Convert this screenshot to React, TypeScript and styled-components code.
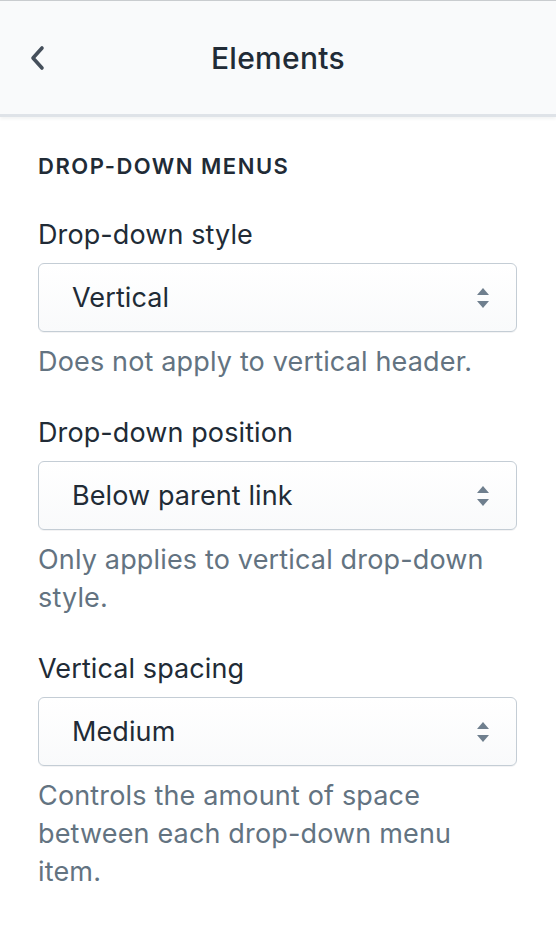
import React from 'react'
import styled, { createGlobalStyle } from 'styled-components'

const GlobalStyle = createGlobalStyle`
  html, body {
    margin: 0;
    padding: 0;
    background: #ffffff;
    font-family: Inter, "Noto Sans", "Liberation Sans", sans-serif;
    -webkit-font-smoothing: antialiased;
  }
`

const Page = styled.div`
  width: 556px;
  min-height: 932px;
  background: #ffffff;
`

const Header = styled.header`
  position: relative;
  height: 113px;
  border-top: 1px solid #c9cccf;
  border-bottom: 3px solid #dfe3e8;
  background: #f9fafb;
  display: flex;
  align-items: center;
  justify-content: center;
  box-shadow: 0 2px 3px rgba(33, 43, 54, 0.06);
`

const BackButton = styled.button`
  position: absolute;
  left: 22px;
  top: 50%;
  transform: translateY(-50%);
  width: 30px;
  height: 40px;
  border: none;
  background: transparent;
  padding: 0;
  display: flex;
  align-items: center;
  justify-content: center;
  cursor: pointer;
`

const Title = styled.h1`
  margin: 0;
  font-size: 30px;
  font-weight: 500;
  color: #212b36;
  letter-spacing: 0.3px;
`

const Body = styled.div`
  padding: 30px 39px 40px 38px;
  display: flex;
  flex-direction: column;
`

const SectionTitle = styled.h2`
  margin: 0 0 31px;
  font-size: 22px;
  line-height: 38px;
  font-weight: 600;
  text-transform: uppercase;
  letter-spacing: 1.5px;
  color: #212b36;
`

const Field = styled.div`
  display: flex;
  flex-direction: column;
  & + & {
    margin-top: 33px;
  }
`

const Label = styled.label`
  font-size: 27px;
  line-height: 38px;
  color: #212b36;
  margin-bottom: 9px;
  letter-spacing: 0.1px;
`

const SelectBox = styled.div`
  height: 69px;
  box-sizing: border-box;
  border: 1.5px solid #c4cdd5;
  border-radius: 6px;
  background: linear-gradient(180deg, #ffffff, #f9fafb);
  box-shadow: 0 1px 0 rgba(22, 29, 37, 0.05);
  display: flex;
  align-items: center;
  justify-content: space-between;
  padding: 0 26px 0 33px;
`

const SelectValue = styled.span`
  font-size: 27px;
  color: #212b36;
  letter-spacing: 0.1px;
`

const Help = styled.p`
  margin: 11px 0 0;
  font-size: 27px;
  line-height: 38px;
  color: #637381;
  letter-spacing: 0.16px;
`

const Arrows = () => (
  <svg width="14" height="22" viewBox="0 0 14 22" aria-hidden="true">
    <path d="M1 8 L7 1 L13 8 Z" fill="#6f7f8e" />
    <path d="M1 14 L7 21 L13 14 Z" fill="#6f7f8e" />
  </svg>
)

const Chevron = () => (
  <svg width="16" height="26" viewBox="0 0 16 26" aria-hidden="true">
    <path
      d="M13 3 L4 13 L13 23"
      fill="none"
      stroke="#454f5b"
      strokeWidth="3.6"
      strokeLinecap="round"
      strokeLinejoin="round"
    />
  </svg>
)

type FieldProps = { label: string; value: string; help: string }

const SelectField = ({ label, value, help }: FieldProps) => (
  <Field>
    <Label>{label}</Label>
    <SelectBox>
      <SelectValue>{value}</SelectValue>
      <Arrows />
    </SelectBox>
    <Help>{help}</Help>
  </Field>
)

const fields: FieldProps[] = [
  { label: 'Drop-down style', value: 'Vertical', help: 'Does not apply to vertical header.' },
  { label: 'Drop-down position', value: 'Below parent link', help: 'Only applies to vertical drop-down style.' },
  { label: 'Vertical spacing', value: 'Medium', help: 'Controls the amount of space between each drop-down menu item.' },
]

const App = () => {
  return (
    <Page>
      <GlobalStyle />
      <Header>
        <BackButton aria-label="Back">
          <Chevron />
        </BackButton>
        <Title>Elements</Title>
      </Header>
      <Body>
        <SectionTitle>Drop-down menus</SectionTitle>
        {fields.map((f) => (
          <SelectField key={f.label} {...f} />
        ))}
      </Body>
    </Page>
  )
}

export default App
